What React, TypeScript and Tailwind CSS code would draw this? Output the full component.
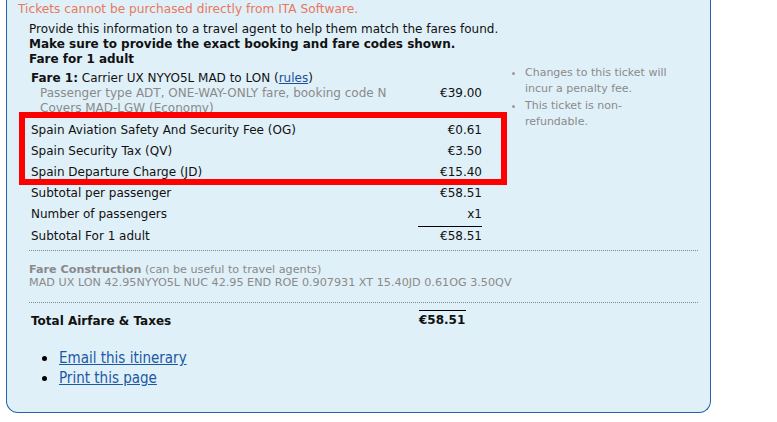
const taxes = [
  { label: 'Spain Aviation Safety And Security Fee (OG)', amount: '€0.61' },
  { label: 'Spain Security Tax (QV)', amount: '€3.50' },
  { label: 'Spain Departure Charge (JD)', amount: '€15.40' },
];

function Row({ label, amount, rule }: { label: string; amount: string; rule?: boolean }) {
  return (
    <div className="flex h-[21px] items-center">
      <div className="w-[387px]">{label}</div>
      <div className="flex w-[64px] justify-end">
        <span className={rule ? 'border-t border-black w-full text-right leading-[19px]' : ''}>{amount}</span>
      </div>
    </div>
  );
}

export default function App() {
  return (
    <div className="min-h-[422px] w-[777px] bg-white font-['DejaVu_Sans',Verdana,sans-serif] text-[12px] text-[#111]">
      <div className="relative ml-[6px] h-[413px] w-[705px] rounded-b-[12px] border-x border-b border-[#2563a8] bg-[#e0f0f8]">
        <div className="pl-[11px] pt-[1px] text-[12.2px] leading-[16px] text-[#e8785e]">
          Tickets cannot be purchased directly from ITA Software.
        </div>

        <div className="pl-[22px] pt-[5px] leading-[15px]">
          <div>Provide this information to a travel agent to help them match the fares found.</div>
          <div className="font-bold">Make sure to provide the exact booking and fare codes shown.</div>
          <div className="font-bold">Fare for 1 adult</div>
        </div>

        <div className="flex pl-[24px] pt-[4px]">
          <div className="w-[451px]">
            <div className="leading-[15px]">
              <span className="font-bold">Fare 1:</span> Carrier UX NYYO5L MAD to LON (
              <a className="text-[#1a4f9c] underline">rules</a>)
            </div>
            <div className="flex text-[#8a8a8a] leading-[15px]">
              <div className="w-[377px] pl-[9px]">
                <div className="whitespace-nowrap overflow-hidden">
                  Passenger type ADT, ONE-WAY-ONLY fare, booking code N
                </div>
                <div>Covers MAD-LGW (Economy)</div>
              </div>
              <div className="w-[74px] text-right text-[#111]">€39.00</div>
            </div>
            <div className="pt-[3px]">
              {taxes.map((t) => (
                <Row key={t.label} label={t.label} amount={t.amount} />
              ))}
              <Row label="Subtotal per passenger" amount="€58.51" />
              <Row label="Number of passengers" amount="x1" />
              <div className="pt-[1px]">
                <Row label="Subtotal For 1 adult" amount="€58.51" rule />
              </div>
            </div>
          </div>
          <ul className="ml-[43px] -mt-[6px] text-[11px] leading-[16px] text-[#8a8a8a] list-disc marker:text-[#999]">
            <li className="w-[150px]">Changes to this ticket will incur a penalty fee.</li>
            <li className="w-[150px] mt-[1px]">This ticket is non-refundable.</li>
          </ul>
        </div>

        <div className="ml-[22px] mr-[12px] mt-[4px] border-t border-dotted border-[#888]" />
        <div className="pl-[22px] pt-[12px] text-[11.2px] leading-[13px] text-[#8a8a8a]">
          <div>
            <span className="font-bold">Fare Construction</span> (can be useful to travel agents)
          </div>
          <div>MAD UX LON 42.95NYYO5L NUC 42.95 END ROE 0.907931 XT 15.40JD 0.61OG 3.50QV</div>
        </div>
        <div className="ml-[22px] mr-[12px] mt-[13px] border-t border-dotted border-[#888]" />

        <div className="flex pl-[24px] pt-[7px] font-bold text-[12px]">
          <div className="w-[388px] pt-[2px]">Total Airfare &amp; Taxes</div>
          <div className="w-[47px] border-t border-black">€58.51</div>
        </div>

        <ul className="ml-[51px] mt-[18px] list-disc marker:text-black font-['DejaVu_Sans_Condensed','DejaVu_Sans',sans-serif] text-[15px] leading-[20px] text-[#1a58a4]">
          <li className="pl-[1px]">
            <a className="underline">Email this itinerary</a>
          </li>
          <li className="pl-[1px]">
            <a className="underline">Print this page</a>
          </li>
        </ul>

        <div className="absolute left-[12px] top-[112px] h-[73px] w-[488px] border-[6px] border-[#ff0000]" />
      </div>
    </div>
  );
}
